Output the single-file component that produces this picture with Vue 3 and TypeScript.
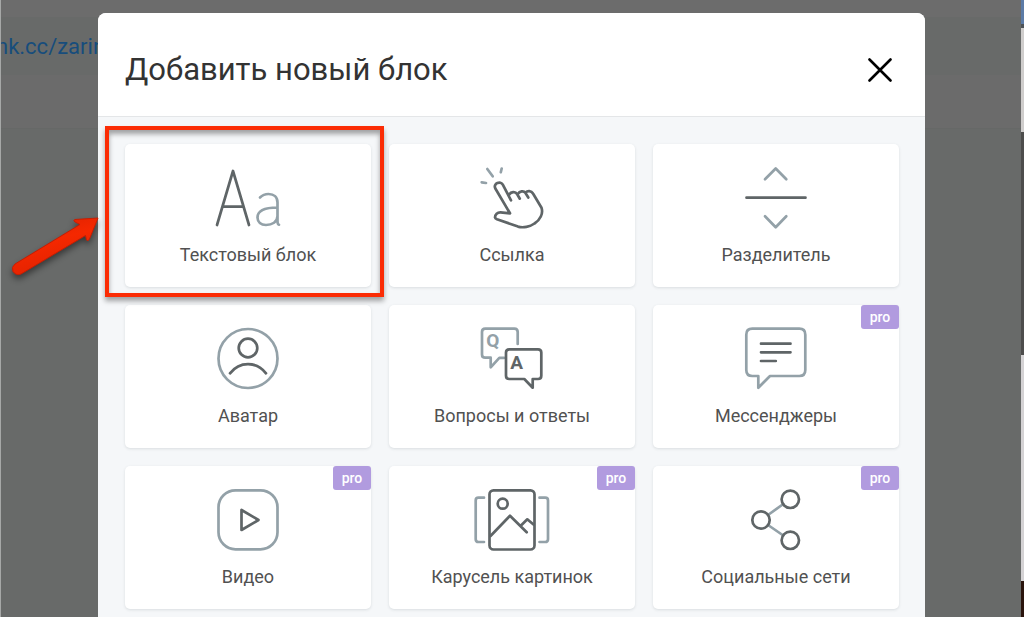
<script setup lang="ts">
type Icon = 'text' | 'link' | 'divider' | 'avatar' | 'faq' | 'messenger' | 'video' | 'carousel' | 'social'

interface Block {
  icon: Icon
  label: string
  pro?: boolean
  marked?: boolean
}

const blocks: Block[] = [
  { icon: 'text', label: 'Текстовый блок', marked: true },
  { icon: 'link', label: 'Ссылка' },
  { icon: 'divider', label: 'Разделитель' },
  { icon: 'avatar', label: 'Аватар' },
  { icon: 'faq', label: 'Вопросы и ответы' },
  { icon: 'messenger', label: 'Мессенджеры', pro: true },
  { icon: 'video', label: 'Видео', pro: true },
  { icon: 'carousel', label: 'Карусель картинок', pro: true },
  { icon: 'social', label: 'Социальные сети', pro: true },
]
</script>

<template>
  <div class="screen">
    <div class="page">
      <div class="strip"></div>
      <div class="address"><a href="#">nk.cc/zarin</a></div>
      <div class="toolbar"></div>
    </div>
    <div class="edge">
      <i class="edge-blue"></i>
      <i class="edge-light"></i>
      <i class="edge-dark"></i>
      <i class="edge-panel"></i>
      <i class="edge-brown"></i>
    </div>

    <div class="overlay">
      <section class="modal" role="dialog" aria-labelledby="modal-title">
        <header class="head">
          <h1 id="modal-title">Добавить новый блок</h1>
          <button class="close" type="button" aria-label="Закрыть">
            <svg viewBox="0 0 24 24"><path d="M1.500 1.500 22.500 22.500M22.500 1.500 1.500 22.500" /></svg>
          </button>
        </header>
        <div class="grid">
          <div v-for="b in blocks" :key="b.icon" class="cell">
            <button class="card" type="button">
              <svg class="icon" viewBox="0 0 80 64" aria-hidden="true">
                <g v-if="b.icon === 'text'">
                  <path class="dark" d="M9 59 25 5 41 59M14.500 40.700H35.500" />
                  <path class="pale" d="M52 31.500C54 29.500 57 28 60.500 28C66 28 69.500 31 69.500 36.500V55C69.500 57.500 70 58.500 71 58.700M69.500 41.500C60 41.500 49.500 43.500 49.500 51.500C49.500 56 53 59 58 59C64 59 69.500 56 69.500 50" />
                </g>
                <g v-else-if="b.icon === 'link'">
                  <path class="pale" d="M15.300 3 20.700 10.300M29.700 2.500 28.800 6.300M9.700 16.300 14 17" />
                  <path class="dark" d="M39 34.300 30.800 18.700C28.700 14.500 21 17.500 23.200 22.200L38 47.300 28.500 46.300C25.500 46.200 23 48.500 23 51.500C23.200 52.500 24 52.800 25 53.200L46 60.600C51 62.200 58 60.700 62.500 57.500C68 54 71.500 47.500 69.500 41.700L61 27.500C59.300 24.500 55.500 24.600 53.500 26.500M36.800 29C39 25.500 43.300 25.200 45.200 28.200L47.800 32.700M45.500 28.200C47.800 25 51.600 24.400 53.500 27L56.300 31.500" />
                </g>
                <g v-else-if="b.icon === 'divider'">
                  <path class="pale" d="M29 13.300 39.700 2.500 50.300 13.300M29 50.300 39.700 61.300 50.300 50.300" />
                  <path class="dark" d="M10.500 31.700H69.500" />
                </g>
                <g v-else-if="b.icon === 'avatar'">
                  <circle class="pale" cx="40" cy="31.500" r="29.500" />
                  <circle class="dark" cx="40" cy="21" r="9.300" />
                  <path class="dark" d="M22 46.300C31.500 34 48.500 34 58 46.300" />
                </g>
                <g v-else-if="b.icon === 'faq'">
                  <path class="pale" d="M45.700 17V5Q45.700 1.700 42.400 1.700H13.300Q10 1.700 10 5V27.400Q10 30.700 13.300 30.700H18.700V40.300L27.300 30.900H32" />
                  <path class="dark" d="M37.300 22.300H66Q69.300 22.300 69.300 25.600V48.700Q69.300 52 66 52H60.700V60.700L52.300 52H37.300Q34 52 34 48.700V25.600Q34 22.300 37.300 22.300Z" />
                  <text class="letter letter-pale" x="20.700" y="20">Q</text>
                  <text class="letter" x="44.600" y="41.500">A</text>
                </g>
                <g v-else-if="b.icon === 'messenger'">
                  <path class="pale" d="M16.300 1.700H63.300Q69.300 1.700 69.300 7.700V43Q69.300 49 63.300 49H34L22.300 60.700V49H16.300Q10.300 49 10.300 43V7.700Q10.300 1.700 16.300 1.700Z" />
                  <path class="dark" d="M25 16.700H54.500M25 25.300H54.500M25 34H39.800" />
                </g>
                <g v-else-if="b.icon === 'video'">
                  <rect class="pale" x="10.500" y="2.300" width="59" height="59" rx="17" />
                  <path class="dark" d="M33.500 22V42L50.500 32Z" />
                </g>
                <g v-else-if="b.icon === 'carousel'">
                  <path class="pale" d="M12 9.700H6.500Q3.700 9.700 3.700 12.500V51.200Q3.700 54 6.500 54H12M67.500 9.700H73.200Q76 9.700 76 12.500V51.200Q76 54 73.200 54H67.500" />
                  <rect class="dark" x="17.500" y="2.300" width="45" height="59.200" rx="4" />
                  <circle class="dark" cx="30.700" cy="15.700" r="5" />
                  <path class="dark" d="M18.500 48 38 27.700 54.700 44.300M49 37.500 55.300 31.300 61.500 36.500" />
                </g>
                <g v-else>
                  <path class="pale" d="M32 27 47.300 16M32 37 47.300 47.500" />
                  <circle class="dark" cx="54.300" cy="11.300" r="8.700" />
                  <circle class="dark" cx="25" cy="32" r="8.700" />
                  <circle class="dark" cx="54.300" cy="52.300" r="8.700" />
                </g>
              </svg>
              <span class="label">{{ b.label }}</span>
              <span v-if="b.pro" class="pro">pro</span>
            </button>
            <div v-if="b.marked" class="marker"></div>
          </div>
        </div>
      </section>
    </div>

    <svg class="arrow" viewBox="0 0 110 80" aria-hidden="true">
      <defs>
        <linearGradient id="arrow-fill" x1="0" y1="0" x2="0.400" y2="1">
          <stop offset="0" stop-color="#d82000" />
          <stop offset="0.500" stop-color="#f52800" />
          <stop offset="1" stop-color="#e22200" />
        </linearGradient>
      </defs>
      <path d="M98 8 74.700 9.500Q73 10.500 75 12L80 14.500 15 54Q11 57 13 61.500Q16 66 21 64L85.500 25.500 86.500 30Q88 32 89.500 29Z" />
    </svg>
  </div>
</template>

<style>
html,
body {
  margin: 0;
  overflow: hidden;
}
</style>

<style scoped>
.screen {
  position: relative;
  height: 100vh;
  overflow: hidden;
  background: #686a69;
  font-family: Roboto, "Liberation Sans", sans-serif;
}
.page {
  border-left: 1px solid #a6a8a7;
  height: 100%;
  box-sizing: border-box;
}
.strip {
  height: 17px;
  background: #6c6c6c;
}
.address {
  height: 58px;
  line-height: 60px;
  overflow: hidden;
  background: #686a69;
  font-size: 22px;
  text-indent: -5px;
}
.address a {
  color: #174d7c;
  text-decoration: none;
}
.toolbar {
  height: 53px;
  background: #6b6b6b;
  border-bottom: 1px solid #666867;
}
.edge {
  position: absolute;
  top: 0;
  right: 0;
  bottom: 0;
  width: 3px;
  display: flex;
  flex-direction: column;
}
.edge-blue {
  height: 24px;
  background: #5c7ba6;
  border-bottom: 4px solid #4e5357;
}
.edge-light {
  height: 104px;
  background: #cfcdcc;
}
.edge-dark {
  height: 223px;
  background: #4d4d4c;
}
.edge-panel {
  height: 226px;
  background: #d4d2d4;
}
.edge-brown {
  flex: 1;
  background: #2a140c;
}
.overlay {
  position: absolute;
  inset: 0;
  padding: 13px 99px 0 98px;
}
.modal {
  min-height: 100%;
  background: #f5f7f9;
  border-radius: 8px 8px 0 0;
  overflow: hidden;
}
.head {
  display: flex;
  align-items: center;
  justify-content: space-between;
  box-sizing: border-box;
  height: 104px;
  padding: 11px 33px 0 27px;
  background: #fff;
  border-bottom: 1px solid #e4e6e8;
}
h1 {
  margin: 0;
  font-size: 31px;
  line-height: 40px;
  font-weight: 400;
  color: #333;
}
.close {
  display: flex;
  padding: 0;
  border: 0;
  background: none;
}
.close svg {
  width: 24px;
  height: 24px;
  fill: none;
  stroke: #000;
  stroke-width: 2.6;
  stroke-linecap: round;
}
.grid {
  display: grid;
  grid-template-columns: repeat(3, 1fr);
  gap: 18px;
  padding: 27px 26px 27px 27px;
}
.cell {
  position: relative;
}
.card {
  position: relative;
  display: flex;
  flex-direction: column;
  align-items: center;
  gap: 13px;
  width: 100%;
  height: 143px;
  padding: 22px 0 0;
  border: 0;
  border-radius: 5px;
  background: #fff;
  box-shadow: 0 1px 3px rgba(60, 70, 80, 0.14);
  font-family: inherit;
}
.icon {
  width: 80px;
  height: 64px;
  flex: none;
  fill: none;
  stroke-width: 2.7;
  stroke-linecap: round;
  stroke-linejoin: round;
}
.dark {
  stroke: #5f6567;
}
.pale {
  stroke: #93a1a8;
}
.letter {
  font-size: 19px;
  font-weight: 700;
  text-anchor: middle;
  fill: #5f6567;
}
.letter-pale {
  fill: #93a1a8;
}
.label {
  font-size: 18px;
  line-height: 24px;
  color: #515151;
  white-space: nowrap;
}
.pro {
  position: absolute;
  top: 0;
  right: 0;
  width: 38px;
  border-radius: 3px;
  background: #b19bdf;
  color: #fff;
  font-size: 14px;
  font-weight: 500;
  line-height: 24px;
  text-align: center;
}
.marker {
  position: absolute;
  z-index: 1;
  top: -18px;
  right: -13px;
  bottom: -10px;
  left: -20px;
  border: 4px solid #fb2c05;
  box-shadow: 0 4px 5px rgba(0, 0, 0, 0.35), inset 0 4px 5px rgba(0, 0, 0, 0.35);
  pointer-events: none;
}
.arrow {
  position: absolute;
  top: 210px;
  left: 0;
  width: 110px;
  height: 80px;
  filter: drop-shadow(0 4px 3px rgba(0, 0, 0, 0.45));
}
.arrow path {
  fill: url(#arrow-fill);
  stroke: #c71d02;
  stroke-width: 1;
  stroke-linejoin: round;
}
</style>
